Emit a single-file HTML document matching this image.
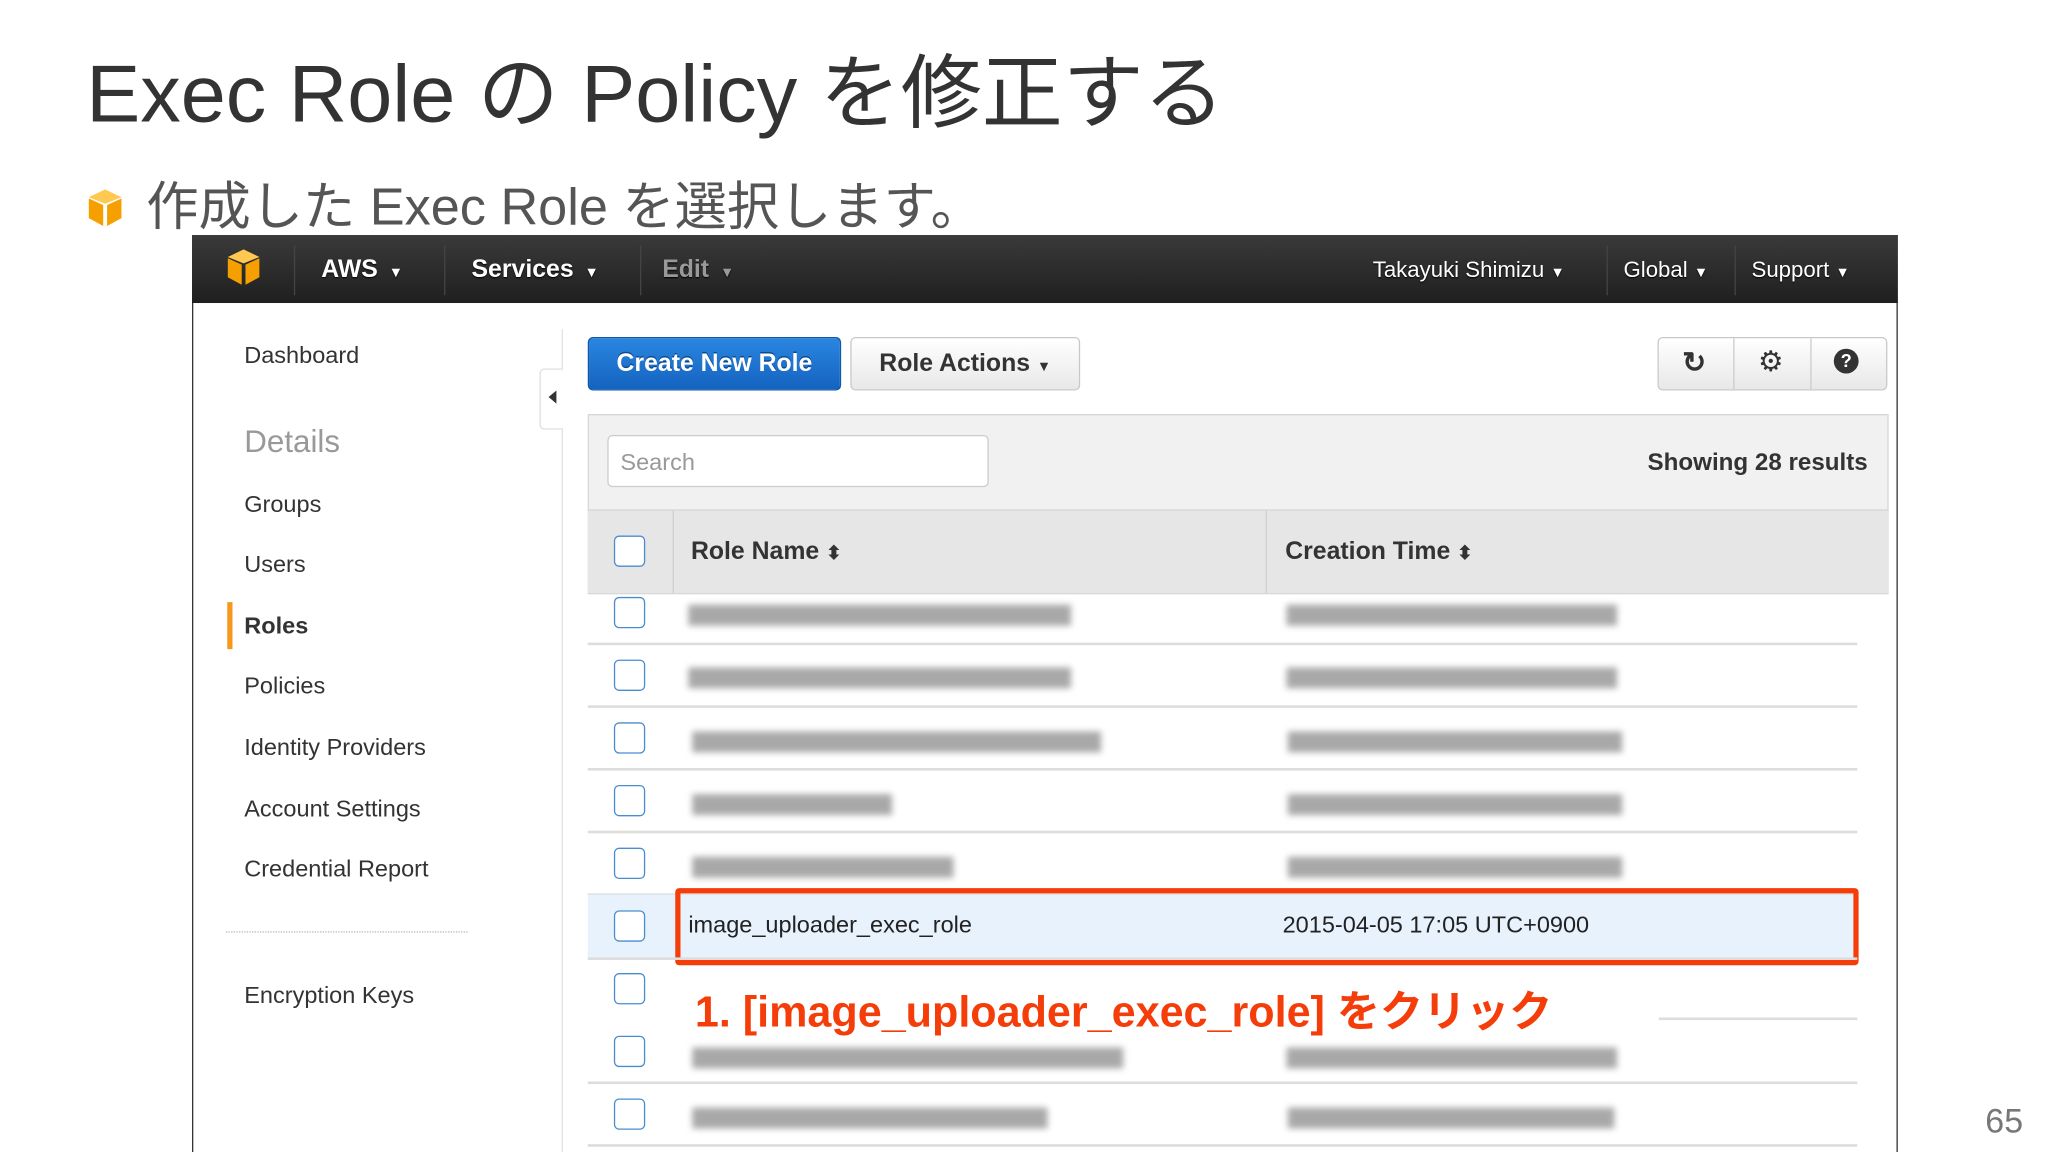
<!DOCTYPE html>
<html><head><meta charset="utf-8"><style>
html,body{margin:0;padding:0;background:#fff;overflow:hidden}
#w{width:2048px;height:1152px;overflow:hidden;position:relative}
#s{position:absolute;left:0;top:0;width:1568px;height:882px;transform:scale(1.30612);transform-origin:0 0;font-family:"Liberation Sans","Noto Sans CJK JP",sans-serif}
.a{position:absolute;white-space:nowrap}
.nav{color:#fff;font-size:19px;top:196px;text-shadow:0 1px 1px #000}
.car{font-size:11px}
.sep{position:absolute;top:188px;width:1px;height:38px;background:#444}
.sb{font-size:18px;color:#333;left:187px}
.cb{position:absolute;left:470px;width:22px;height:22px;border:1.5px solid #4a8cd0;border-radius:4px;background:#fff}
.ln{position:absolute;left:450px;width:972px;height:2px;background:#ddd}
.bl{position:absolute;height:16px;background:#9a9a9a;filter:blur(2.5px);opacity:.85}
</style></head><body><div id="w"><div id="s">
<div class="a" style="left:66px;top:21px;font-size:62px;color:#333;font-family:'Liberation Sans','Noto Sans CJK JP',sans-serif">Exec Role の Policy を修正する</div>
<svg class="a" style="left:67px;top:144px" width="27" height="30" viewBox="0 0 27 30"><path d="M13.5 1 L26 7 L13.5 12 L1 7Z" fill="#ffc850"/><path d="M1 8 L12 13 V29 L1 23Z" fill="#f5a000"/><path d="M26 8 L15 13 V29 L26 23Z" fill="#f5a000"/></svg>
<div class="a" style="left:112px;top:126px;font-size:40px;color:#555;font-family:'Liberation Sans','Noto Sans CJK JP',sans-serif">作成した Exec Role を選択します。</div>
<div class="a" style="left:1520px;top:843px;font-size:26px;color:#777">65</div>

<div class="a" style="left:147px;top:180px;width:1304px;height:702px;border:1px solid #333;border-bottom:none;background:#fff"></div>
<div class="a" style="left:147px;top:180px;width:1306px;height:52px;background:linear-gradient(#3a3a3a,#1f1f1f)"></div>
<svg class="a" style="left:172px;top:190px" width="29" height="29" viewBox="0 0 27 30"><path d="M13.5 1 L26 7 L13.5 12 L1 7Z" fill="#ffc850"/><path d="M1 8 L12 13 V29 L1 23Z" fill="#f5a000"/><path d="M26 8 L15 13 V29 L26 23Z" fill="#f5a000"/></svg>
<div class="sep" style="left:225px"></div><div class="sep" style="left:340px"></div><div class="sep" style="left:490px"></div><div class="sep" style="left:1230px"></div><div class="sep" style="left:1328px"></div>
<div class="a nav" style="left:246px;font-weight:bold">AWS <span class="car">&nbsp;▼</span></div>
<div class="a nav" style="left:361px;font-weight:bold">Services <span class="car">&nbsp;▼</span></div>
<div class="a nav" style="left:507px;font-weight:bold;color:#999">Edit <span class="car">&nbsp;▼</span></div>
<div class="a nav" style="left:1051px;font-size:17px;top:197px">Takayuki Shimizu <span class="car">▼</span></div>
<div class="a nav" style="left:1243px;font-size:17px;top:197px">Global <span class="car">▼</span></div>
<div class="a nav" style="left:1341px;font-size:17px;top:197px">Support <span class="car">▼</span></div>

<div class="a" style="left:430px;top:252px;width:1px;height:630px;background:#e3e3e3"></div>
<div class="a" style="left:413px;top:282px;width:17px;height:45px;border:1px solid #ddd;border-right:none;border-radius:4px 0 0 4px;background:#fff"></div>
<div class="a" style="left:420px;top:299px;width:0;height:0;border:5px solid transparent;border-right:6px solid #333;border-left:none"></div>
<div class="a sb" style="top:262px">Dashboard</div>
<div class="a sb" style="top:325px;font-size:24px;color:#999">Details</div>
<div class="a sb" style="top:376px">Groups</div>
<div class="a sb" style="top:422px">Users</div>
<div class="a" style="left:174px;top:461px;width:4px;height:36px;background:#f7981d"></div>
<div class="a sb" style="top:469px;font-weight:bold">Roles</div>
<div class="a sb" style="top:515px">Policies</div>
<div class="a sb" style="top:562px">Identity Providers</div>
<div class="a sb" style="top:609px">Account Settings</div>
<div class="a sb" style="top:655px">Credential Report</div>
<div class="a" style="left:173px;top:713px;width:185px;border-top:1px dotted #bbb"></div>
<div class="a sb" style="top:752px">Encryption Keys</div>

<div class="a" style="left:450px;top:258px;width:194px;height:41px;border-radius:4px;background:linear-gradient(#2a86e0,#1463c0);border:1px solid #0f57a8;box-sizing:border-box;color:#fff;font-weight:bold;font-size:19px;text-align:center;line-height:40px;text-shadow:0 -1px 0 #0b4a90">Create New Role</div>
<div class="a" style="left:651px;top:258px;width:176px;height:41px;border-radius:4px;background:linear-gradient(#fff,#e8e8e8);border:1px solid #c8c8c8;box-sizing:border-box;color:#333;font-weight:bold;font-size:19px;text-align:center;line-height:40px">Role Actions <span style="font-size:11px">▼</span></div>
<div class="a" style="left:1269px;top:258px;width:176px;height:41px;border-radius:4px;background:linear-gradient(#fff,#e8e8e8);border:1px solid #c8c8c8;box-sizing:border-box"></div>
<div class="a" style="left:1327px;top:259px;width:1px;height:39px;background:#ccc"></div>
<div class="a" style="left:1386px;top:259px;width:1px;height:39px;background:#ccc"></div>
<div class="a" style="left:1288px;top:265px;font-size:22px;font-weight:bold;color:#333">↻</div>
<div class="a" style="left:1346px;top:264px;font-size:22px;color:#333">⚙</div>
<div class="a" style="left:1404px;top:267px;width:19px;height:19px;border-radius:50%;background:#333;color:#fff;font-size:14px;font-weight:bold;text-align:center;line-height:19px">?</div>

<div class="a" style="left:450px;top:317px;width:994px;height:136px;background:#f1f1f1;border:1px solid #d8d8d8"></div>
<div class="a" style="left:465px;top:333px;width:292px;height:40px;background:#fff;border:1px solid #ccc;border-radius:4px;box-sizing:border-box;color:#999;font-size:18px;line-height:40px;padding-left:9px">Search</div>
<div class="a" style="right:138px;top:343px;font-weight:bold;font-size:18.5px;color:#333">Showing 28 results</div>
<div class="a" style="left:450px;top:390px;width:996px;height:1px;background:#d4d4d4"></div>
<div class="a" style="left:450px;top:391px;width:996px;height:63px;background:#e6e6e6"></div>
<div class="a" style="left:515px;top:391px;width:1px;height:63px;background:#d0d0d0"></div>
<div class="a" style="left:969px;top:391px;width:1px;height:63px;background:#d0d0d0"></div>
<div class="cb" style="top:410px"></div>
<div class="a" style="left:529px;top:412px;font-weight:bold;font-size:19px;color:#333">Role Name <span style="font-size:14px">⬍</span></div>
<div class="a" style="left:984px;top:412px;font-weight:bold;font-size:19px;color:#333">Creation Time <span style="font-size:14px">⬍</span></div>

<div class="cb" style="top:457px"></div><div class="bl" style="left:527px;top:463px;width:293px"></div><div class="bl" style="left:985px;top:463px;width:253px"></div><div class="ln" style="top:492px"></div>
<div class="cb" style="top:505px"></div><div class="bl" style="left:527px;top:511px;width:293px"></div><div class="bl" style="left:985px;top:511px;width:253px"></div><div class="ln" style="top:540px"></div>
<div class="cb" style="top:553px"></div><div class="bl" style="left:530px;top:560px;width:313px"></div><div class="bl" style="left:986px;top:560px;width:256px"></div><div class="ln" style="top:588px"></div>
<div class="cb" style="top:601px"></div><div class="bl" style="left:530px;top:608px;width:153px"></div><div class="bl" style="left:986px;top:608px;width:256px"></div><div class="ln" style="top:636px"></div>
<div class="cb" style="top:649px"></div><div class="bl" style="left:530px;top:656px;width:200px"></div><div class="bl" style="left:986px;top:656px;width:256px"></div><div class="ln" style="top:684px"></div>
<div class="a" style="left:450px;top:685px;width:972px;height:48px;background:#e7f2fd"></div>
<div class="cb" style="top:697px"></div>
<div class="a" style="left:517px;top:680px;width:906px;height:59px;border:4px solid #f53d0a;border-radius:3px;box-sizing:border-box"></div>
<div class="a" style="left:527px;top:698px;font-size:18px;color:#222">image_uploader_exec_role</div>
<div class="a" style="left:982px;top:698px;font-size:18px;color:#222">2015-04-05 17:05 UTC+0900</div>
<div class="ln" style="top:733px"></div>
<div class="cb" style="top:745px"></div>
<div class="ln" style="top:779px;left:1270px;width:152px"></div>
<div class="a" style="left:532px;top:748px;font-size:33px;font-weight:bold;color:#f53d0a">1. [image_uploader_exec_role] をクリック</div>
<div class="cb" style="top:793px"></div><div class="bl" style="left:530px;top:802px;width:330px"></div><div class="bl" style="left:985px;top:802px;width:253px"></div><div class="ln" style="top:828px"></div>
<div class="cb" style="top:841px"></div><div class="bl" style="left:530px;top:848px;width:272px"></div><div class="bl" style="left:986px;top:848px;width:250px"></div><div class="ln" style="top:876px"></div>
</div></div></body></html>
